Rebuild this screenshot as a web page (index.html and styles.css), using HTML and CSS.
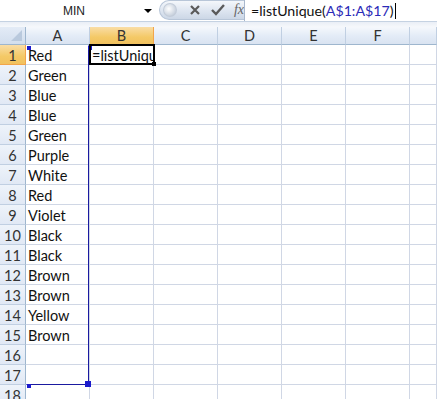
FILE: index.html
```html
<!DOCTYPE html>
<html lang="en">
<head>
    <meta charset="UTF-8">
    <title>Book1 - listUnique</title>
    <link rel="stylesheet" href="styles.css">
</head>
<body>
    <!-- Formula bar -->
    <div class="formula-bar">
        <div class="name-box">
            <span class="name-text">MIN</span>
            <span class="name-arrow"></span>
        </div>
        <div class="fx-buttons">
            <span class="grip"></span>
            <svg class="btn-icon" width="14" height="14" viewBox="0 0 14 14">
                <path d="M3 3 L11 11 M11 3 L3 11" stroke="#5a5a5a" stroke-width="2.2" fill="none"/>
            </svg>
            <svg class="btn-icon" width="16" height="14" viewBox="0 0 16 14">
                <path d="M2 7 L6 11 L14 2" stroke="#5a5a5a" stroke-width="2.4" fill="none"/>
            </svg>
            <span class="fx">fx</span>
        </div>
        <div class="formula-input">=listUnique(<span class="ref">A$1:A$17</span>)<span class="caret"></span></div>
    </div>
    <div class="bar-gap"></div>

    <!-- Sheet -->
    <div class="sheet" id="sheet">
        <div class="range-box"></div>
    </div>

    <script>
        // Column A values
        const values = ['Red', 'Green', 'Blue', 'Blue', 'Green', 'Purple', 'White', 'Red',
            'Violet', 'Black', 'Black', 'Brown', 'Brown', 'Yellow', 'Brown'];
        const cols = ['A', 'B', 'C', 'D', 'E', 'F', ''];
        const sheet = document.getElementById('sheet');

        // header row
        const corner = document.createElement('div');
        corner.className = 'corner';
        sheet.appendChild(corner);
        cols.forEach(c => {
            const h = document.createElement('div');
            h.className = 'col-head' + (c === 'B' ? ' active' : '');
            h.textContent = c;
            sheet.appendChild(h);
        });

        // data rows
        for (let r = 1; r <= 18; r++) {
            const rh = document.createElement('div');
            rh.className = 'row-head' + (r === 1 ? ' active' : '');
            rh.textContent = r;
            sheet.appendChild(rh);
            cols.forEach(c => {
                const cell = document.createElement('div');
                cell.className = 'cell';
                if (c === 'A' && values[r - 1]) cell.textContent = values[r - 1];
                if (c === 'B' && r === 1) {
                    cell.className = 'cell editing';
                    cell.innerHTML = '<span>=listUnique(A$1:A$17)</span><i class="handle"></i>';
                }
                sheet.appendChild(cell);
            });
        }
    </script>
</body>
</html>
```

FILE: styles.css
```css
body {
    margin: 0;
    width: 437px;
    height: 399px;
    overflow: hidden;
    background: #fff;
    font-family: Lato, "Open Sans", sans-serif;
}
.formula-bar {
    display: flex;
    height: 21px;
    border-bottom: 1px solid #c5d2e2;
    background: #fff;
}
.name-box {
    width: 159px;
    display: flex;
    align-items: center;
    font-family: "Liberation Sans", Arial, sans-serif;
    font-size: 12px;
    color: #222;
}
.name-text {
    flex: 1;
    text-align: center;
    padding-left: 4px;
}
.name-arrow {
    width: 0;
    height: 0;
    border-left: 4px solid transparent;
    border-right: 4px solid transparent;
    border-top: 4px solid #000;
    margin-right: 7px;
    margin-top: 1px;
}
.fx-buttons {
    width: 85px;
    height: 20px;
    display: flex;
    align-items: center;
    gap: 8px;
    border-radius: 10px 0 0 10px;
    background: linear-gradient(#f4f7fb, #dde5f0 55%, #ccd7e6);
    border: 1px solid #b8c6d8;
    border-right: none;
    box-sizing: border-box;
}
.grip {
    width: 12px;
    height: 12px;
    margin-left: 3px;
    margin-right: 3px;
    border-radius: 50%;
    background: radial-gradient(circle at 40% 40%, #fff, #c9d2de 70%, #aab6c6);
    border: 1px solid #c3ccd9;
}
.btn-icon {
    display: block;
}
.fx {
    font-family: "Liberation Serif", "Times New Roman", serif;
    font-style: italic;
    font-size: 14px;
    color: #666;
}
.formula-input {
    flex: 1;
    border-left: 1px solid #a9b8cc;
    padding-left: 6px;
    font-size: 14.2px;
    line-height: 21px;
    color: #111;
    white-space: nowrap;
}
.ref {
    color: #2b2bb8;
}
.caret {
    display: inline-block;
    width: 1px;
    height: 16px;
    background: #000;
    vertical-align: -3px;
    margin-left: 1px;
}
.bar-gap {
    height: 5px;
    background: linear-gradient(#e9eef6, #f6f8fb);
}
.sheet {
    position: relative;
    display: grid;
    grid-template-columns: 26px repeat(6, 64px) 27px;
    grid-template-rows: 18px;
    grid-auto-rows: 20px;
    font-size: 14.5px;
}
.corner {
    background: linear-gradient(#e3ebf6, #d2deee);
    border-right: 1px solid #9eb6ce;
    border-bottom: 1px solid #9eb6ce;
    box-sizing: border-box;
    position: relative;
}
.corner::after {
    content: "";
    position: absolute;
    right: 3px;
    bottom: 3px;
    border-left: 11px solid transparent;
    border-bottom: 11px solid #b9c9dd;
}
.col-head {
    background: linear-gradient(#f5f8fc, #e4ecf7 50%, #d9e3f1);
    border-right: 1px solid #c0cfe2;
    border-bottom: 1px solid #9eb6ce;
    box-sizing: border-box;
    text-align: center;
    line-height: 18px;
    color: #333;
}
.row-head {
    background: linear-gradient(#eef3fa, #e1e9f5);
    border-right: 1px solid #9eb6ce;
    border-bottom: 1px solid #c0cfe2;
    box-sizing: border-box;
    text-align: center;
    line-height: 21px;
    color: #333;
    overflow: hidden;
}
.col-head.active,
.row-head.active {
    background: linear-gradient(#f9dda6, #f4c966 60%, #f1c15f);
    border-color: #f2a54b;
}
.cell {
    border-right: 1px solid #d0d7e5;
    border-bottom: 1px solid #d0d7e5;
    box-sizing: border-box;
    padding-left: 2px;
    line-height: 21px;
    color: #111;
    white-space: nowrap;
    overflow: hidden;
}
.cell.editing {
    position: relative;
    overflow: visible;
    z-index: 2;
    border: 2px solid #000;
    margin: -1px 0 0 -1px;
    width: 66px;
    height: 21px;
    padding-left: 1px;
    line-height: 19px;
}
.cell.editing span {
    display: block;
    overflow: hidden;
}
.handle {
    position: absolute;
    right: -3px;
    bottom: -3px;
    width: 4px;
    height: 4px;
    background: #000;
}
.range-box {
    position: absolute;
    left: 26px;
    top: 18px;
    width: 63px;
    height: 340px;
    border: 1px solid #1a1aa0;
    box-sizing: border-box;
    border-top-color: transparent;
    border-left-color: transparent;
    z-index: 1;
}
.range-box::before,
.range-box::after {
    content: "";
    position: absolute;
    width: 4px;
    height: 4px;
    background: #1a1acc;
}
.range-box::before {
    left: 0;
    top: 0;
    box-shadow: 61px 0 0 #1a1acc, 0 338px 0 #1a1acc;
}
.range-box::after {
    right: -3px;
    bottom: -3px;
    width: 6px;
    height: 6px;
}
```
